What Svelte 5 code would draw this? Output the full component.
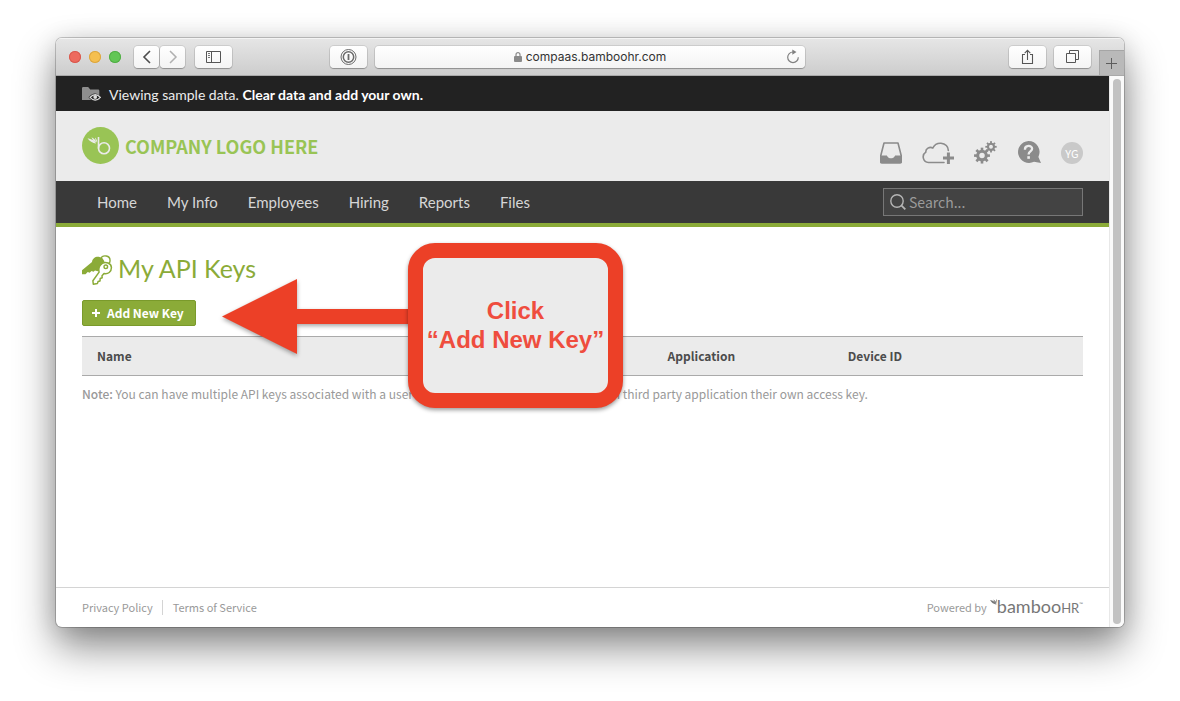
<script>
  const navLinks = ['Home', 'My Info', 'Employees', 'Hiring', 'Reports', 'Files'];
  const teeth = [0, 45, 90, 135, 180, 225, 270, 315];
  let query = $state('');
</script>

{#snippet gear(cx, cy, r, w)}
  <g transform="translate({cx} {cy})" fill="#8b8b8b">
    {#each teeth as angle}
      <rect x={-w / 2} y={-r * 1.62} width={w} height={r * 0.9} transform="rotate({angle})" />
    {/each}
    <circle r={r * 0.87} fill="none" stroke="#8b8b8b" stroke-width={r * 0.62} />
  </g>
{/snippet}

<div class="desktop">
  <div class="window">
    <div class="toolbar">
      <div class="tools left">
        <span class="lights">
          <button class="light close" aria-label="Close"></button>
          <button class="light minimise" aria-label="Minimise"></button>
          <button class="light zoom" aria-label="Zoom"></button>
        </span>
        <span class="history">
          <button class="tool narrow" aria-label="Back">
            <svg width="10" height="14" viewBox="0 0 10 14"><path d="M8 1 2 7l6 6" fill="none" stroke="#4c4c4c" stroke-width="1.6" /></svg>
          </button>
          <button class="tool narrow" aria-label="Forward">
            <svg width="10" height="14" viewBox="0 0 10 14"><path d="m2 1 6 6-6 6" fill="none" stroke="#b0b0b0" stroke-width="1.5" /></svg>
          </button>
        </span>
        <button class="tool" aria-label="Show sidebar">
          <svg width="15" height="12" viewBox="0 0 15 12" fill="none" stroke="#555"><path d="M.5.5h14v11H.5zM5.500.5v11" /><path d="M2 2.500h2M2 4.500h2M2 6.500h2" stroke="#777" /></svg>
        </button>
        <button class="tool password" aria-label="Password manager">
          <svg width="17" height="18" viewBox="0.500 0 17 18" fill="none" stroke="#6a6a6a"><circle cx="9" cy="9" r="7.500" stroke-width="1" /><circle cx="9" cy="9" r="5.200" stroke-width="1.500" /><path d="M9 6v6" stroke-width="1.800" /></svg>
        </button>
      </div>
      <div class="address">
        <svg width="8" height="10" viewBox="0 0 8 10"><rect y="4" width="8" height="6" rx="1" fill="#8a8a8a" /><path d="M2 5V2.700a2 2 0 0 1 4 0V5" fill="none" stroke="#8a8a8a" stroke-width="1.200" /></svg>
        <span>compaas.bamboohr.com</span>
        <button class="reload" aria-label="Reload">
          <svg width="14" height="15" viewBox="0 0 14 15"><path d="M7 3a5.300 5.300 0 1 0 5.300 5.300" fill="none" stroke="#808080" stroke-width="1.200" /><path d="M6.300.500 10.500 3 6.300 5.800z" fill="#808080" /></svg>
        </button>
      </div>
      <div class="tools right">
        <button class="tool" aria-label="Share">
          <svg width="13" height="16" viewBox="0 0 13 16" fill="none" stroke="#555" stroke-width="1.100"><path d="M4 5.500H1.500v9h10v-9H9M6.500 11V1.500M3.700 4.200l2.800-2.800 2.800 2.800" /></svg>
        </button>
        <button class="tool" aria-label="Show tabs">
          <svg width="13" height="13" viewBox="0 0 13 13" fill="none" stroke="#555"><path d="M.5 3.500h9v9h-9zM3.500 3.500v-3h9v9h-3" /></svg>
        </button>
        <button class="newtab" aria-label="New tab">
          <svg width="11" height="11" viewBox="0 0 11 11" stroke="#5c5c5c"><path d="M5.500 0v11M0 5.500h11" /></svg>
        </button>
      </div>
    </div>

    <div class="viewport">
      <div class="page">
        <div class="sample">
          <svg width="19" height="15" viewBox="0 0 19 15">
            <path d="M0 1.200A1.200 1.200 0 0 1 1.200 0h5l2 2.500h8A1.200 1.200 0 0 1 17.300 3.700V13H0z" fill="#8e8e8e" />
            <path d="M6.500 10.300Q13 2.600 19 10.300 13 18 6.500 10.300z" fill="#222" />
            <path d="M8 10.300Q13.200 4.800 18.400 10.300 13.200 15.800 8 10.300z" fill="#222" stroke="#ddd" stroke-width="1.200" />
            <circle cx="13.200" cy="10" r="1.900" fill="#ddd" />
          </svg>
          <span>Viewing sample data. <a href="#clear">Clear data and add your own.</a></span>
        </div>

        <header>
          <a class="logo" href="#home">
            <svg width="37" height="37" viewBox="0 0 37 37">
              <circle cx="18.500" cy="18.500" r="18.500" fill="#99c455" />
              <g fill="none" stroke="#ebebeb" stroke-width="1.600"><path d="M16.500 10v11.500" /><circle cx="22" cy="21.300" r="5.500" /></g>
              <path d="M5.500 11.300c4 .6 7 2.200 8.800 5.200-3.800-.4-7-2.200-8.800-5.200zM9.500 10.300c2.500 1.200 4.400 3 5.200 5.200-2.400-1-4.400-2.800-5.200-5.200zM13 10.500c1.400 1.400 2.200 3 2.200 4.800-1.300-1.300-2.100-2.900-2.200-4.800z" fill="#ebebeb" />
            </svg>
            <span>COMPANY LOGO HERE</span>
          </a>
          <div class="actions">
            <a href="#inbox" aria-label="Inbox">
              <svg width="22" height="22" viewBox="0 0 22 22">
                <path d="M4 1h14l3.200 12.500v6a1.300 1.300 0 0 1-1.300 1.300H2.100A1.300 1.300 0 0 1 .8 19.500v-6z" fill="none" stroke="#8b8b8b" stroke-width="1.600" stroke-linejoin="round" />
                <path d="M0 13.500h6.500c1.200 0 .8 2.800 4.500 2.800s3.300-2.800 4.500-2.800H22v6.500a1.500 1.500 0 0 1-1.500 1.500h-19A1.500 1.500 0 0 1 0 20z" fill="#8b8b8b" />
              </svg>
            </a>
            <a href="#upload" aria-label="Add from cloud">
              <svg width="32" height="22" viewBox="0 0 32 22">
                <path d="M22 20.500H6.500A5.600 5.600 0 0 1 3.800 10.200C3.500 6.800 7.500 4.300 10.800 6 12.500 2.500 15.500 1 19 1.200c4.400.3 7.400 3.600 7.300 7.200" fill="none" stroke="#8b8b8b" stroke-width="1.600" stroke-linecap="round" />
                <path d="M26.400 10.500v11.500M21 16H32" stroke="#8b8b8b" stroke-width="3" />
              </svg>
            </a>
            <a href="#settings" aria-label="Settings">
              <svg width="23" height="23" viewBox="0 0 23 23">
                {@render gear(8, 14.6, 4.9, 2.6)}
                {@render gear(17, 5.8, 3.5, 1.8)}
              </svg>
            </a>
            <a href="#help" aria-label="Help">
              <svg width="24" height="23" viewBox="0 0 24 23">
                <path d="M11.500 0a11 11 0 0 1 9.900 15.900L24 22l-7-1.200A11 11 0 1 1 11.500 0z" fill="#8b8b8b" />
                <path d="M7.900 8.700c0-5 7.200-4.800 7.200-.9 0 2.700-3.500 2.600-3.500 5.600" fill="none" stroke="#ebebeb" stroke-width="2.300" />
                <rect x="10.300" y="15.200" width="2.600" height="2.600" fill="#ebebeb" />
              </svg>
            </a>
            <a class="avatar" href="#profile">YG</a>
          </div>
        </header>

        <nav>
          <div class="links">
            {#each navLinks as link}
              <a href="#{link.toLowerCase().replace(' ', '-')}">{link}</a>
            {/each}
          </div>
          <label class="search">
            <svg width="16" height="16" viewBox="0 0 16 16" fill="none" stroke="#b5b5b5"><circle cx="7" cy="7" r="6.200" stroke-width="1.400" /><path d="m11.300 11.300 4 4" stroke-width="1.800" /></svg>
            <input type="text" placeholder="Search..." aria-label="Search" bind:value={query} />
          </label>
        </nav>

        <main>
          <h1>
            <svg width="31" height="30" viewBox="0 0 31 30">
              <path d="M0 15.200 10 7C10.500 3.500 13.500 1.300 17.500 2l3 1.200 2 3.300-4 4.500.3 3.500-2.800 1.700-3-.7-1.500 1.200-2-.7-1.800 1.800-2-.8L3.500 19.300H0z" fill="#8bab38" />
              <g fill="none" stroke="#8bab38" stroke-linejoin="round">
                <path d="M18.800 3.500C20.500-.4 28.500 0 28 6c-.1 1-.3 1.600-.7 2.200" stroke-width="1.400" />
                <path d="M20.300 8.400c3.400-2.300 9-.3 9.100 4.200.1 4.300-3.400 6.800-7.400 6l-2 2.200.2 2-2 .7-.2 2.400-1.900.5-.6 2-4.200.8-.4-3.400 6.200-8.700c-.8-3.300.2-6.700 3.200-8.700z" fill="#fff" stroke-width="1.500" />
                <circle cx="23.800" cy="11.800" r="1.800" stroke-width="1.400" />
              </g>
            </svg>
            <span>My API Keys</span>
          </h1>

          <button class="add">
            <svg width="8" height="8" viewBox="0 0 8 8" stroke="#fff" stroke-width="2"><path d="M4 0v8M0 4h8" /></svg>
            Add New Key
          </button>

          <table>
            <thead>
              <tr>
                <th class="name" scope="col">Name</th>
                <th class="app" scope="col">Application</th>
                <th scope="col">Device ID</th>
              </tr>
            </thead>
          </table>

          <p class="note">
            <b>Note:</b> You can have multiple API keys associated with a user account. We recommend giving each third party application their own access key.
          </p>

          <svg class="arrow" width="190" height="80" viewBox="0 0 190 80"><path d="M0 38.500 75 1v30h115v15H75v30z" fill="#ec4027" /></svg>
          <div class="callout">Click<br />“Add New Key”</div>
        </main>

        <footer>
          <div class="legal">
            <a href="#privacy">Privacy Policy</a>
            <a href="#terms">Terms of Service</a>
          </div>
          <div class="powered">
            <span>Powered by</span>
            <a class="brand" href="#bamboohr">
              <svg width="6" height="7" viewBox="0 0 6 7" fill="#777"><path d="M-1 1c3 .4 5.400 2 6.600 4.700C2.800 5.200.4 3.600-1 1zM2.200.4c1.800 1 3.200 2.400 3.700 4.200C4.200 3.700 2.900 2.300 2.200.4zM5 0c.8 1 1.200 2.200 1 3.600C5.200 2.600 4.900 1.300 5 0z" /></svg>
              <span>bamboo</span><small>HR</small><sup>™</sup>
            </a>
          </div>
        </footer>
      </div>
      <div class="scrollbar"><span class="thumb"></span></div>
    </div>
  </div>
</div>

<style>
  :global(body) {
    margin: 0;
    background: #fff;
  }

  .desktop {
    box-sizing: border-box;
    min-height: 100vh;
    padding: 38px 56px 74px;
    display: flex;
    font-family: 'Noto Sans CJK SC', sans-serif;
  }

  .window {
    flex: 1;
    min-width: 0;
    display: flex;
    flex-direction: column;
    border-radius: 6px;
    overflow: hidden;
    background: #fff;
    box-shadow:
      0 0 0 1px rgba(0, 0, 0, 0.2),
      0 20px 40px rgba(0, 0, 0, 0.46),
      0 2px 24px rgba(0, 0, 0, 0.12);
  }

  button {
    border: 0;
    margin: 0;
    padding: 0;
    font: inherit;
    cursor: pointer;
  }

  a {
    color: inherit;
    text-decoration: none;
  }

  svg {
    display: block;
    flex: none;
  }

  .toolbar {
    box-sizing: border-box;
    height: 38px;
    display: grid;
    grid-template-columns: 1fr minmax(200px, 430px) 1fr;
    align-items: center;
    background: linear-gradient(#e6e6e6, #cdcdcd);
    border-bottom: 1px solid #a9a9a9;
    box-shadow: inset 0 1px #f4f4f4;
  }

  .tools {
    display: flex;
    align-items: center;
  }

  .left {
    gap: 10px;
    padding: 0 8px 0 13px;
  }

  .right {
    justify-content: flex-end;
    align-self: stretch;
    gap: 8px;
  }

  .lights {
    display: flex;
    gap: 8px;
    margin-right: 3px;
  }

  .light {
    width: 12px;
    height: 12px;
    border-radius: 50%;
  }

  .close {
    background: #ed6a5e;
    box-shadow: inset 0 0 0 1px #d8594e;
  }

  .minimise {
    background: #f5bf4f;
    box-shadow: inset 0 0 0 1px #dba640;
  }

  .zoom {
    background: #62c655;
    box-shadow: inset 0 0 0 1px #52ad46;
  }

  .history {
    display: flex;
    gap: 1px;
  }

  .tool,
  .address {
    height: 22px;
    display: flex;
    align-items: center;
    justify-content: center;
    border-radius: 4px;
    background: linear-gradient(#fff, #f4f4f4);
    box-shadow:
      0 0 0 1px rgba(0, 0, 0, 0.09),
      0 1px 1px rgba(0, 0, 0, 0.25);
  }

  .tool {
    width: 37px;
  }

  .narrow {
    width: 25px;
  }

  .password {
    margin-left: auto;
  }

  .address {
    position: relative;
    gap: 4px;
    font: 12px/24px Inter, sans-serif;
    color: #333;
  }

  .reload {
    position: absolute;
    right: 5px;
    background: none;
  }

  .newtab {
    align-self: flex-end;
    width: 25px;
    height: 25px;
    padding-top: 1px;
    display: grid;
    place-items: center;
    background: #b9b9b9;
    box-shadow: inset 1px 1px #a5a5a5;
  }

  .viewport {
    flex: 1;
    display: flex;
  }

  .page {
    flex: 1;
    min-width: 0;
    display: flex;
    flex-direction: column;
  }

  .scrollbar {
    box-sizing: border-box;
    width: 15px;
    padding: 3px;
    border-left: 1px solid #e8e8e8;
    background: #fafafa;
    display: flex;
  }

  .thumb {
    width: 8px;
    border-radius: 4px;
    background: #c2c2c2;
  }

  .sample {
    box-sizing: border-box;
    height: 35px;
    padding: 2px 26px 0;
    display: flex;
    align-items: center;
    gap: 8px;
    background: #222;
    color: #ececec;
    font: 14px/20px Lato, sans-serif;
  }

  .sample a {
    color: #fff;
    font-weight: 700;
  }

  header {
    box-sizing: border-box;
    height: 70px;
    padding: 16px 26px;
    display: flex;
    align-items: flex-start;
    justify-content: space-between;
    background: #ebebeb;
  }

  .logo {
    display: flex;
    align-items: center;
    gap: 6px;
    color: #99c455;
    font: 700 18px/32px 'Noto Sans CJK SC', sans-serif;
    white-space: nowrap;
  }

  .actions {
    display: flex;
    align-items: center;
    gap: 20px;
    padding-top: 14px;
  }

  .avatar {
    width: 22px;
    height: 22px;
    border-radius: 50%;
    background: #c9c9c9;
    color: #fff;
    font-size: 11px;
    line-height: 22px;
    text-align: center;
  }

  nav {
    height: 42px;
    padding: 0 26px 0 41px;
    display: flex;
    align-items: center;
    justify-content: space-between;
    background: #393939;
    border-bottom: 4px solid #8bab38;
  }

  .links {
    display: flex;
    gap: 30px;
    color: #d6d6d6;
    font: 15px/20px Lato, sans-serif;
  }

  .search {
    box-sizing: border-box;
    width: 200px;
    height: 28px;
    padding: 0 6px;
    display: flex;
    align-items: center;
    gap: 3px;
    background: #434343;
    border: 1px solid #777;
  }

  input {
    min-width: 0;
    flex: 1;
    padding: 0;
    border: 0;
    outline: 0;
    background: none;
    color: #fff;
    font: 14px/20px 'Noto Sans CJK SC', sans-serif;
  }

  input::placeholder {
    color: #9b9b9b;
    opacity: 1;
  }

  main {
    flex: 1;
    position: relative;
    padding: 28px 26px;
  }

  h1 {
    margin: 0;
    display: flex;
    align-items: flex-start;
    gap: 5px;
    color: #8bab38;
    font: 400 25px/27px Lato, sans-serif;
  }

  .add {
    height: 26px;
    margin: 15px 0 10px;
    padding: 0 11px 0 9px;
    display: flex;
    align-items: center;
    gap: 7px;
    border: 1px solid #7a9a2b;
    border-radius: 2px;
    background: #8bab38;
    color: #fff;
    font-size: 12px;
    font-weight: 700;
    line-height: 20px;
  }

  table {
    width: 100%;
    border-collapse: separate;
    border-spacing: 0;
    table-layout: fixed;
    background: #ebebeb;
  }

  th {
    box-sizing: border-box;
    padding: 9px 15px;
    border: 0 solid #aaa;
    border-width: 1px 0;
    color: #4c4c4c;
    font-size: 12px;
    font-weight: 700;
    line-height: 20px;
    text-align: left;
  }

  .name {
    width: 57%;
  }

  .app {
    width: 18%;
  }

  .note {
    margin: 8px 0;
    color: #999;
    font-size: 12px;
    line-height: 20px;
  }

  .note b {
    font-weight: 500;
  }

  .arrow {
    position: absolute;
    left: 166px;
    top: 51px;
    filter: drop-shadow(0 2px 2px rgba(0, 0, 0, 0.35));
  }

  .callout {
    position: absolute;
    left: 352px;
    top: 16px;
    box-sizing: border-box;
    width: 215px;
    height: 165px;
    padding-bottom: 2px;
    display: flex;
    align-items: center;
    justify-content: center;
    border: 15px solid #ec4027;
    border-radius: 27px;
    background: #ebebeb;
    box-shadow: 0 2px 4px rgba(0, 0, 0, 0.4);
    color: #ef4d3e;
    font: 700 24px/29px 'Liberation Sans', sans-serif;
    text-align: center;
    white-space: nowrap;
  }

  footer {
    box-sizing: border-box;
    height: 40px;
    padding: 0 26px;
    display: flex;
    align-items: center;
    justify-content: space-between;
    border-top: 1px solid #d4d4d4;
    color: #999;
    font-size: 11px;
    line-height: 15px;
  }

  .legal,
  .powered {
    display: flex;
    align-items: center;
  }

  .legal a + a {
    margin-left: 9px;
    padding-left: 10px;
    border-left: 1px solid #d4d4d4;
  }

  .powered {
    gap: 4px;
  }

  .brand {
    display: flex;
    align-items: baseline;
    padding-bottom: 2px;
    color: #777;
    font: 18px/20px Lato, sans-serif;
  }

  .brand svg {
    align-self: flex-start;
    margin-top: 3px;
    overflow: visible;
  }

  .brand small {
    font-size: 13px;
  }

  .brand sup {
    align-self: flex-start;
    font-size: 5px;
    line-height: 16px;
  }
</style>
